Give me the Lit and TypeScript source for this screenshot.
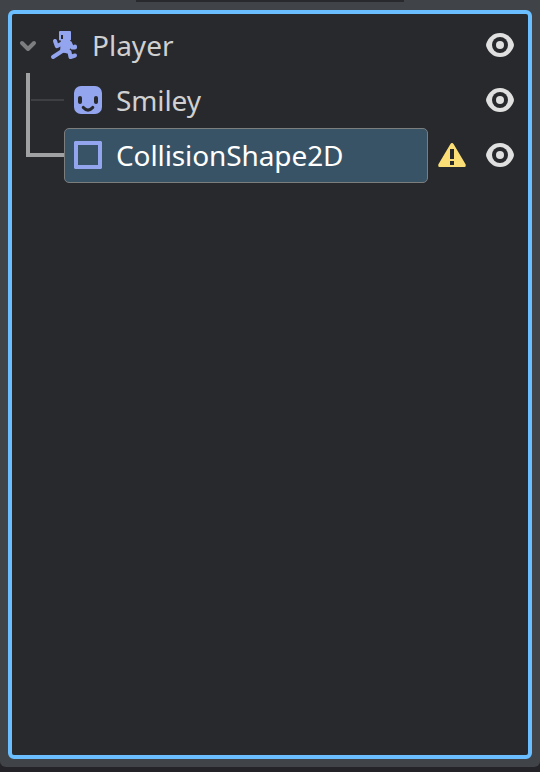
import { LitElement, html, css, svg } from "lit";
import { customElement } from "lit/decorators.js";

const chevron = html`<svg width="24" height="24" viewBox="0 0 24 24">
  <path d="M6 10l6 6 6-6" fill="none" stroke="#7d7e7f" stroke-width="4" stroke-linecap="round" stroke-linejoin="round"/>
</svg>`;

const runner = html`<svg class="runner" width="32" height="32" viewBox="0 0 32 32">
  <g fill="none" stroke="#94a5ef" stroke-linecap="round" stroke-linejoin="round">
    <path d="M7 12L8.800 17.200L14 14.500" stroke-width="4"/>
    <path d="M19 14H22L24 18.500H27V17.500" stroke-width="4"/>
    <path d="M15 21.500L5 28" stroke-width="4"/>
    <path d="M16 21.500L21.500 23L22.500 28L27 26.500" stroke-width="4"/>
  </g>
  <path d="M13 10H22V20L20 24L12 23Z" fill="#94a5ef"/>
  <path fill-rule="evenodd" fill="#94a5ef" d="M12 2H22Q23 2 23 3V10.500Q23 11.500 22 11.500H12Q11 11.500 11 10.500V3Q11 2 12 2ZM13 6V10H15V6Z"/>
</svg>`;

const smiley = html`<svg width="32" height="32" viewBox="0 0 32 32">
  <rect x="2" y="2" width="28" height="28" rx="7" fill="#94a5ef"/>
  <rect x="6" y="12" width="4" height="8" rx="2" fill="#28292d"/>
  <rect x="22" y="12" width="4" height="8" rx="2" fill="#28292d"/>
  <path d="M11.300 23.500Q16 28.700 20.700 23.500" fill="none" stroke="#28292d" stroke-width="3.200" stroke-linecap="round"/>
</svg>`;

const square = html`<svg width="32" height="32" viewBox="0 0 32 32">
  <path fill-rule="evenodd" fill="#94a5ef" d="M3 2H29L30 3V29L29 30H3L2 29V3ZM6 6V26H26V6Z"/>
</svg>`;

const warning = html`<svg width="32" height="32" viewBox="0 0 32 32">
  <path fill="#fbdf76" d="M16 4Q17 4 17.7 5.2L29.7 25.5Q30.3 28 28.5 28H3.5Q1.7 28 2.3 25.5L14.3 5.2Q15 4 16 4Z"/>
  <path fill="#28292d" d="M14 10H18V20H14ZM14 22H18V26H14Z"/>
</svg>`;

const eye = html`<svg width="32" height="32" viewBox="0 0 32 32">
  <path fill="#e0e0e0" d="M16 4C9 4 4.200 9 2.300 14.500Q1.800 16 2.300 17.500C4.200 23 9 28 16 28S27.800 23 29.700 17.500Q30.200 16 29.700 14.500C27.800 9 23 4 16 4Z"/>
  <circle cx="16" cy="16" r="8" fill="#28292d"/>
  <circle cx="16" cy="16" r="4" fill="#e0e0e0"/>
</svg>`;

const branches = svg`
  <path d="M3 27H36" stroke="#3e3f42" stroke-width="2" fill="none"/>
  <path d="M0 0V82H36" stroke="#a0a1a2" stroke-width="4" fill="none"/>`;

@customElement("app-root")
export class AppRoot extends LitElement {
  static styles = css`
    :host { display: block; width: 540px; height: 772px; overflow: hidden; background: #242428; }
    * { box-sizing: border-box; }
    svg { display: block; flex: none; }
    .dock {
      position: relative; height: 767px; padding: 10px 8px 8px;
      background: #404347; border-radius: 0 0 6px 6px;
    }
    .top { position: absolute; top: 0; left: 136px; width: 268px; height: 2px; background: #28292d; }
    .tree {
      position: relative; height: 749px; padding: 4px 0 0;
      border: 4px solid #6abeff; border-radius: 6px; background: #28292d;
      font: 28px/55px "Noto Sans", sans-serif; color: #d0d0d1;
    }
    .row { display: flex; align-items: center; height: 55px; padding-right: 12px; }
    .row svg { margin-top: -0.5px; margin-bottom: 0.5px; }
    .item { display: flex; align-items: center; height: 55px; gap: 12px; flex: 1; white-space: nowrap; }
    .root .item { padding-left: 4px; }
    .root .runner { margin-left: -4px; }
    .child { padding-left: 52px; }
    .child .item { padding-left: 8px; }
    .item.sel {
      flex: none; width: 364px; margin-right: 8px; line-height: 53px;
      border: 1px solid #7c7d7d; border-radius: 5px; background: #395366; color: #fff;
    }
    .child .item.sel { padding-left: 7px; }
    .child .label { letter-spacing: -0.1px; }
    .sel + svg { margin-right: 16px; }
    .lines { position: absolute; left: 16px; top: 59px; overflow: visible; }
  `;

  render() {
    return html`<div class="dock">
      <div class="top"></div>
      <div class="tree">
        <svg class="lines" width="38" height="84">${branches}</svg>
        <div class="row root">
          <div class="item">${chevron}${runner}<span class="label">Player</span></div>
          ${eye}
        </div>
        <div class="row child">
          <div class="item">${smiley}<span class="label">Smiley</span></div>
          ${eye}
        </div>
        <div class="row child">
          <div class="item sel">${square}<span class="label">CollisionShape2D</span></div>
          ${warning}${eye}
        </div>
      </div>
    </div>`;
  }
}
